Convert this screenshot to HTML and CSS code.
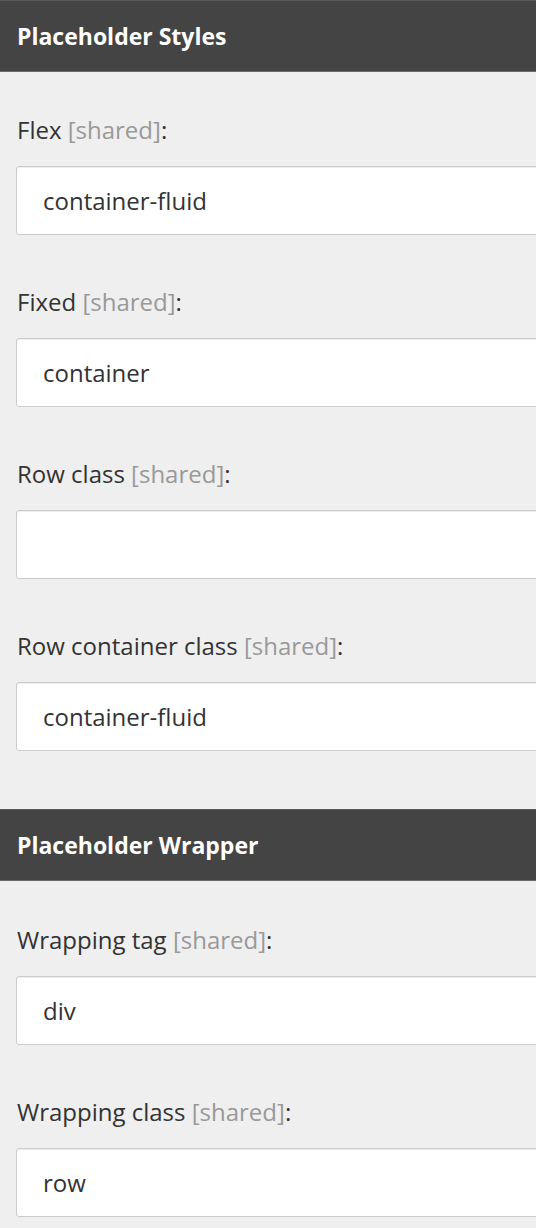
FILE: index.html
```html
<!DOCTYPE html>
<html>
<head>
<meta charset="utf-8">
<link rel="stylesheet" href="styles.css">
</head>
<body>
<div class="page">
  <section class="section">
    <div class="section-header">Placeholder Styles</div>
    <div class="section-body">
      <div class="field">
        <label class="field-label">Flex <span class="shared">[shared]</span>:</label>
        <div class="field-input">container-fluid</div>
      </div>
      <div class="field">
        <label class="field-label">Fixed <span class="shared">[shared]</span>:</label>
        <div class="field-input">container</div>
      </div>
      <div class="field">
        <label class="field-label">Row class <span class="shared">[shared]</span>:</label>
        <div class="field-input"></div>
      </div>
      <div class="field">
        <label class="field-label">Row container class <span class="shared">[shared]</span>:</label>
        <div class="field-input">container-fluid</div>
      </div>
    </div>
  </section>
  <section class="section section-second">
    <div class="section-header">Placeholder Wrapper</div>
    <div class="section-body">
      <div class="field">
        <label class="field-label">Wrapping tag <span class="shared">[shared]</span>:</label>
        <div class="field-input">div</div>
      </div>
      <div class="field">
        <label class="field-label">Wrapping class <span class="shared">[shared]</span>:</label>
        <div class="field-input">row</div>
      </div>
    </div>
  </section>
</div>
</body>
</html>
```
FILE: styles.css
```css
html, body {
  margin: 0;
  padding: 0;
  background: #efefef;
}
body {
  font-family: "Open Sans", "Liberation Sans", sans-serif;
  color: #333;
  overflow: hidden;
}
.page {
  width: 536px;
  overflow: hidden;
}
.section-header {
  box-sizing: border-box;
  height: 72px;
  background: #444444;
  border-top: 1px solid #5a5a5a;
  border-bottom: 1px solid #6a6a6a;
  color: #ffffff;
  font-weight: 700;
  font-size: 23px;
  padding-left: 17px;
  display: flex;
  align-items: center;
}
.section-body {
  padding: 46px 0 58px 16px;
  display: flex;
  flex-direction: column;
  gap: 55px;
}
.section-second .section-body {
  padding-top: 47px;
}
.field {
  display: flex;
  flex-direction: column;
  gap: 24px;
}
.field-label {
  display: block;
  font-size: 24px;
  line-height: 24px;
  color: #333333;
  padding-left: 1px;
}
.shared {
  color: #999999;
}
.field-input {
  box-sizing: border-box;
  width: 560px;
  height: 69px;
  background: #ffffff;
  border: 1px solid #cccccc;
  border-radius: 3px;
  box-shadow: inset 0 1px 1px rgba(0, 0, 0, 0.075);
  padding-left: 26px;
  font-size: 24px;
  color: #333333;
  display: flex;
  align-items: center;
}
```
